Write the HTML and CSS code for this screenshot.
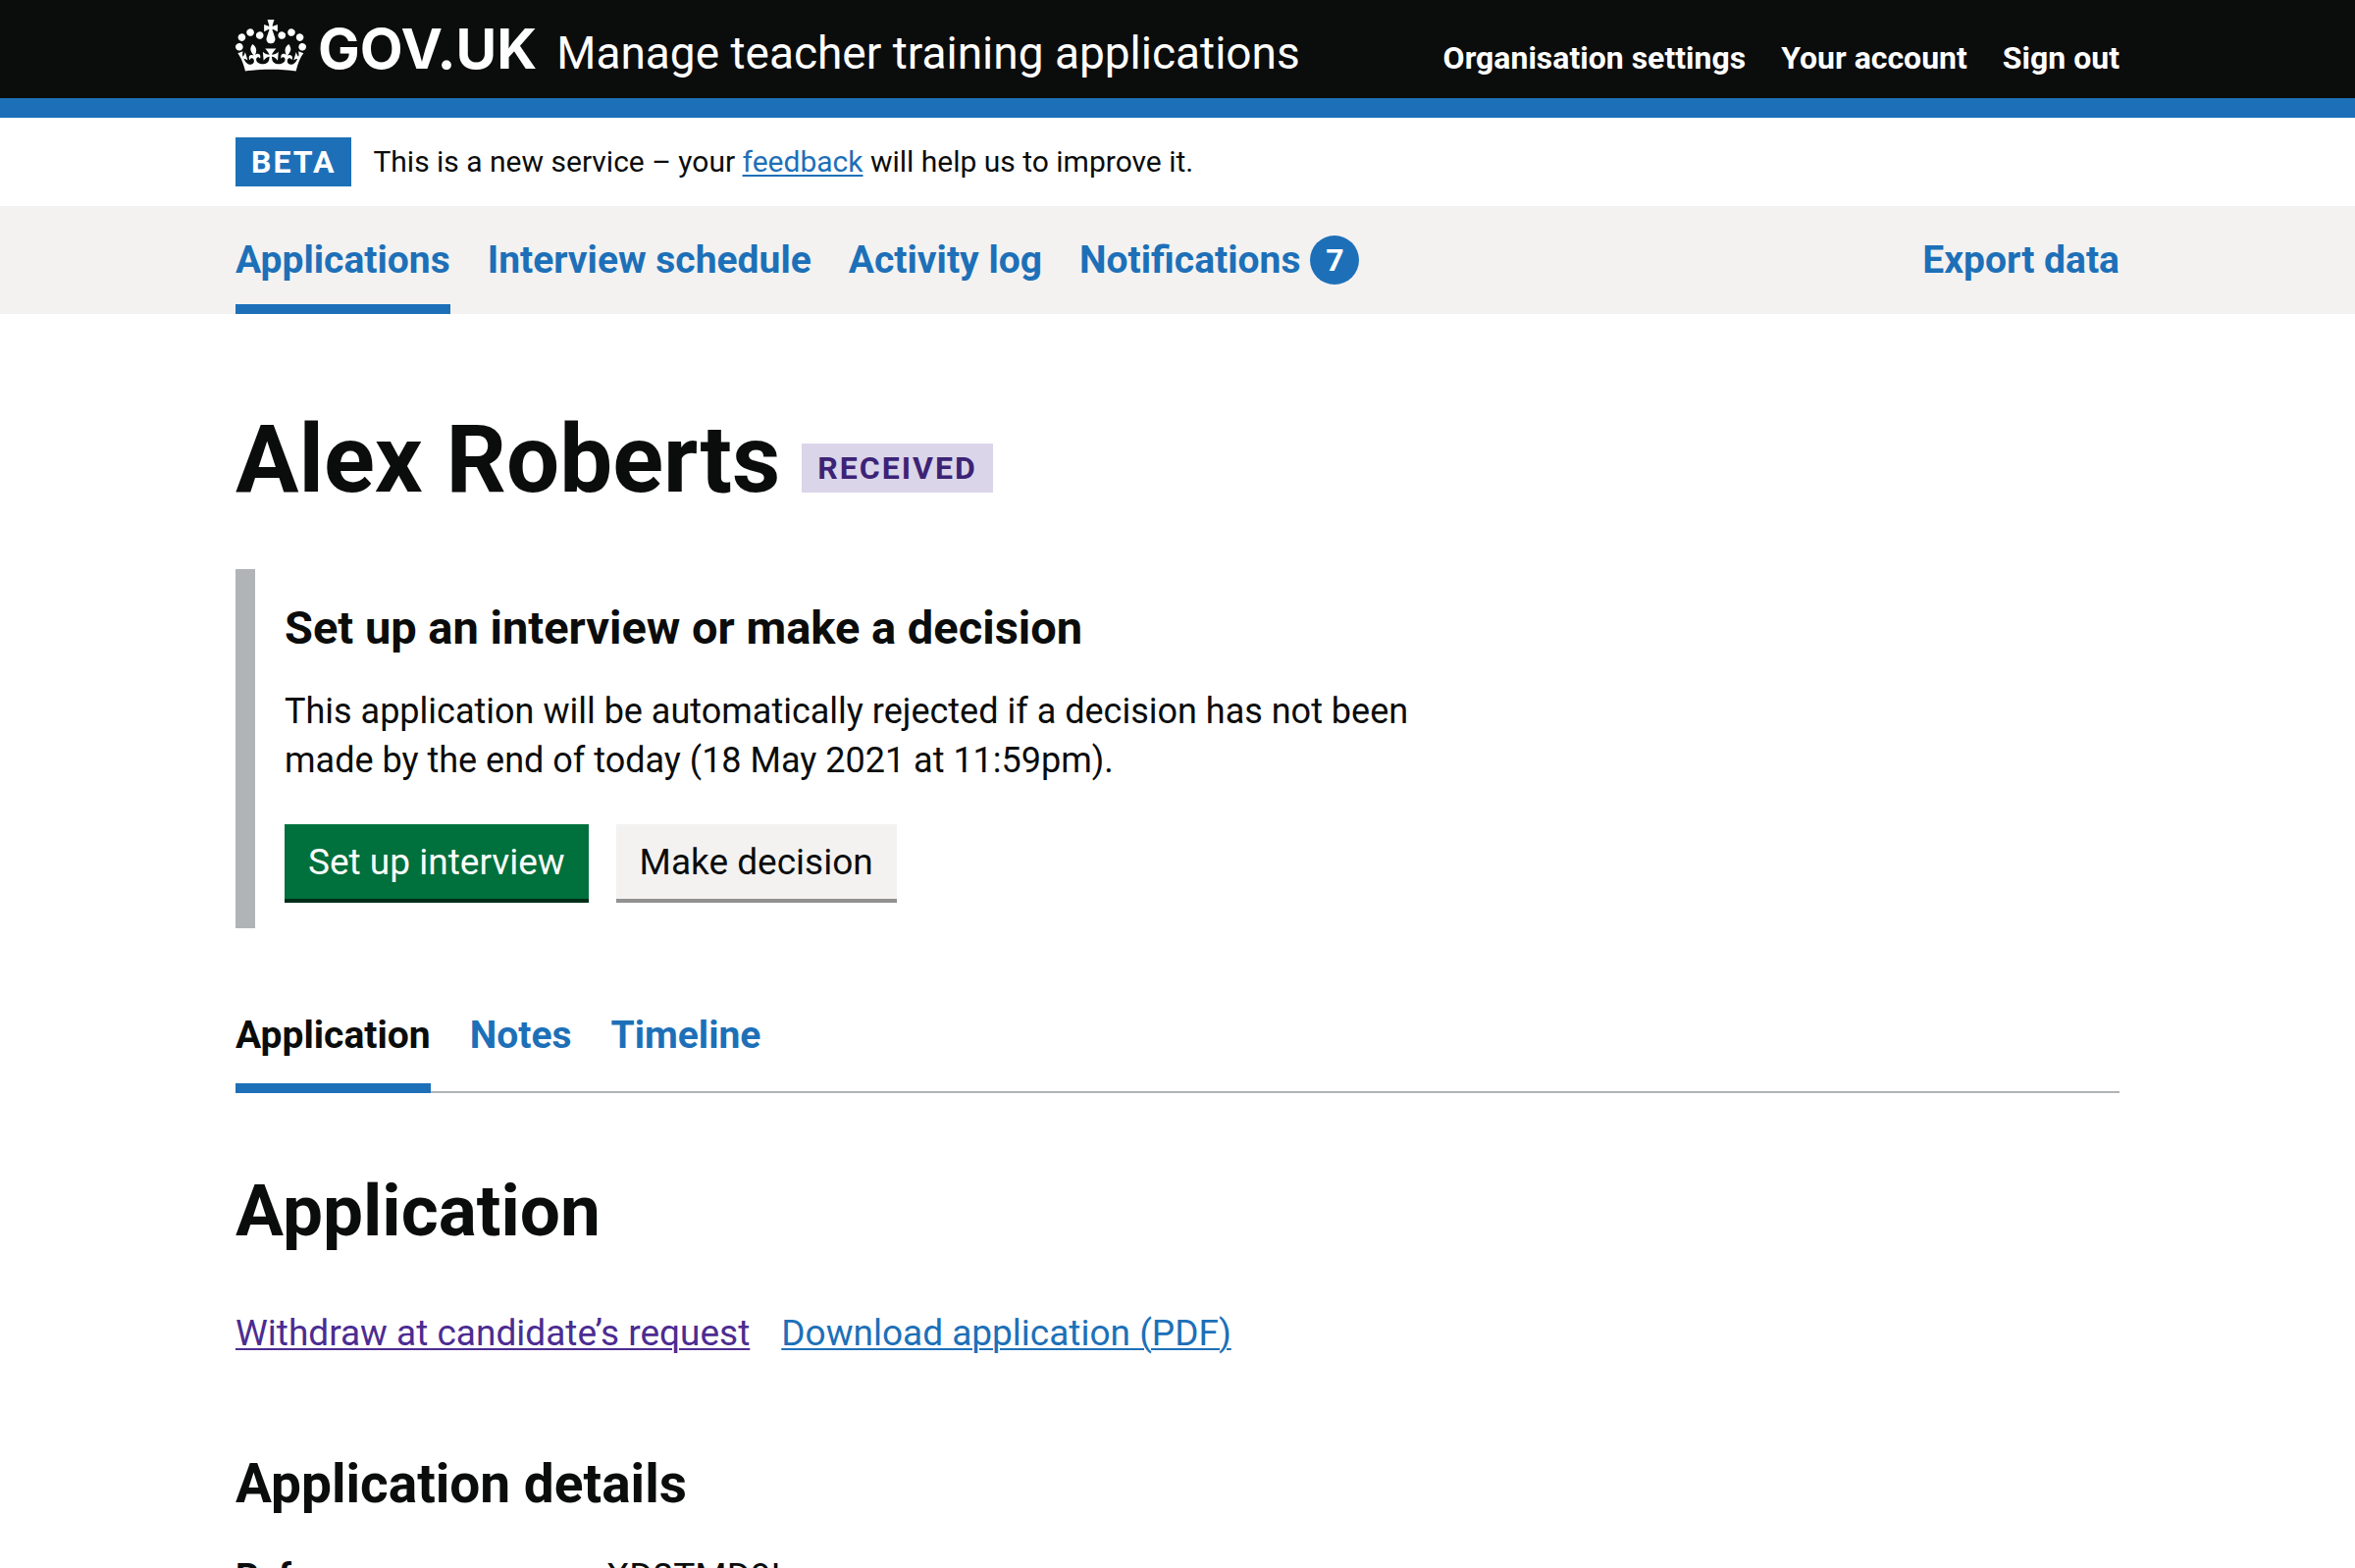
FILE: index.html
```html
<!DOCTYPE html>
<html lang="en">
<head>
  <meta charset="utf-8">
  <meta name="viewport" content="width=device-width, initial-scale=1">
  <title>Alex Roberts - Manage teacher training applications - GOV.UK</title>
  <link rel="stylesheet" href="styles.css">
</head>
<body>
  <header class="header">
    <div class="container header-inner">
      <a class="header-logo" href="#">
        <svg class="header-crown" viewBox="0 0 132 97" width="72" height="53" aria-hidden="true" focusable="false">
          <path fill="currentColor" fill-rule="evenodd" d="M25 30.2c3.5 1.5 7.7-.2 9.1-3.7 1.5-3.6-.2-7.8-3.9-9.2-3.6-1.4-7.6.3-9.1 3.9-1.4 3.5.3 7.5 3.9 9zM9 39.5c3.6 1.5 7.8-.2 9.2-3.7 1.5-3.6-.2-7.8-3.9-9.1-3.6-1.5-7.6.2-9.1 3.8-1.4 3.5.3 7.5 3.8 9zM4.4 57.2c3.5 1.5 7.7-.2 9.1-3.8 1.5-3.6-.2-7.7-3.9-9.1-3.5-1.5-7.6.3-9.1 3.8-1.4 3.5.3 7.6 3.9 9.1zm38.3-21.4c3.5 1.5 7.7-.2 9.1-3.8 1.5-3.6-.2-7.7-3.9-9.1-3.6-1.5-7.6.3-9.1 3.8-1.3 3.6.4 7.7 3.9 9.1zm64.4-5.6c-3.6 1.5-7.8-.2-9.1-3.7-1.5-3.6.2-7.8 3.8-9.2 3.6-1.4 7.7.3 9.2 3.9 1.3 3.5-.4 7.5-3.9 9zm15.9 9.3c-3.6 1.5-7.7-.2-9.1-3.7-1.5-3.6.2-7.8 3.7-9.1 3.6-1.5 7.7.2 9.2 3.8 1.5 3.5-.3 7.5-3.8 9zm4.7 17.7c-3.6 1.5-7.8-.2-9.2-3.8-1.5-3.6.2-7.7 3.9-9.1 3.6-1.5 7.7.3 9.2 3.8 1.3 3.5-.4 7.6-3.9 9.1zM89.3 35.8c-3.6 1.5-7.8-.2-9.2-3.8-1.4-3.6.2-7.7 3.9-9.1 3.6-1.5 7.7.3 9.2 3.8 1.4 3.6-.3 7.7-3.9 9.1zM69.7 17.7l8.9 4.7V9.3l-8.9 2.8c-.2-.3-.5-.6-.9-.9L72.4 0H59.6l3.5 11.2c-.3.3-.6.5-.9.9l-8.8-2.8v13.1l8.8-4.7c.3.3.6.7.9.9l-5 15.4v.1c-.2.8-.4 1.6-.4 2.4 0 4.1 3.1 7.5 7 8.1h.2c.3 0 .7.1 1 .1.4 0 .7 0 1-.1h.2c4-.6 7.1-4.1 7.1-8.1 0-.8-.1-1.7-.4-2.4V34l-5.1-15.4c.4-.2.7-.6 1-.9zM66 92.8c16.9 0 32.8 1.1 47.1 3.2 4-16.9 8.9-26.7 14-33.5l-9.6-3.4c1 4.9 1.1 7.2 0 10.2-1.5-1.4-3-4.3-4.2-8.7L108.6 76c2.8-2 5-3.2 7.5-3.3-4.4 9.4-10 11.9-13.6 11.2-4.3-.8-6.3-4.6-5.6-7.9 1-4.7 5.7-5.9 8-.5 4.3-8.7-3-11.4-7.6-8.8 7.1-7.2 7.9-13.5 2.1-21.1-8 6.1-8.1 12.3-4.5 20.8-4.7-5.4-12.1-2.5-9.5 6.2 3.4-5.2 7.9-2 7.2 3.1-.6 4.3-6.4 7.8-13.5 7.2-10.3-.9-10.9-8-11.2-13.8 2.5-.5 7.1 1.8 11 7.3L80.2 60c-4.1 4.4-8 5.3-12.3 5.4 1.4-4.4 8-11.6 8-11.6H55.5s6.4 7.2 7.9 11.6c-4.2-.1-8-1-12.3-5.4l1.4 16.4c3.9-5.5 8.5-7.7 10.9-7.3-.3 5.8-.9 12.8-11.1 13.8-7.2.6-12.9-2.9-13.5-7.2-.7-5 3.8-8.3 7.1-3.1 2.7-8.7-4.6-11.6-9.4-6.2 3.7-8.5 3.6-14.7-4.6-20.8-5.8 7.6-5 13.9 2.2 21.1-4.7-2.6-11.9.1-7.7 8.8 2.3-5.5 7.1-4.2 8.1.5.7 3.3-1.3 7.1-5.7 7.9-3.5.7-9-1.8-13.5-11.2 2.5.1 4.7 1.3 7.5 3.3l-4.7-15.4c-1.2 4.4-2.7 7.2-4.3 8.7-1.1-3-.9-5.3 0-10.2l-9.5 3.4c5 6.9 9.9 16.7 14 33.5 14.8-2.1 30.8-3.2 47.7-3.2z"/>
        </svg>
        <span class="header-logotype">GOV.UK</span>
      </a>
      <a class="header-service" href="#">Manage teacher training applications</a>
      <nav class="header-nav" aria-label="Account">
        <a href="#">Organisation settings</a>
        <a href="#">Your account</a>
        <a href="#">Sign out</a>
      </nav>
    </div>
  </header>

  <div class="container phase-banner">
    <strong class="tag tag-beta">Beta</strong>
    <span>This is a new service – your <a class="link" href="#">feedback</a> will help us to improve it.</span>
  </div>

  <nav class="primary-nav" aria-label="Primary">
    <div class="container primary-nav-inner">
      <a class="primary-nav-link is-current" href="#" aria-current="page">Applications</a>
      <a class="primary-nav-link" href="#">Interview schedule</a>
      <a class="primary-nav-link" href="#">Activity log</a>
      <a class="primary-nav-link" href="#">Notifications <span class="badge">7</span></a>
      <a class="primary-nav-link is-end" href="#">Export data</a>
    </div>
  </nav>

  <main class="container main">
    <div class="title">
      <h1 class="heading-xl">Alex Roberts</h1>
      <strong class="tag tag-purple">Received</strong>
    </div>

    <section class="inset">
      <h2 class="heading-inset">Set up an interview or make a decision</h2>
      <p class="inset-text">This application will be automatically rejected if a decision has not been made by the end of today (18 May 2021 at 11:59pm).</p>
      <div class="button-group">
        <button class="button" type="button">Set up interview</button>
        <button class="button button-secondary" type="button">Make decision</button>
      </div>
    </section>

    <nav class="tabs" aria-label="Application sections">
      <a class="tab is-current" href="#" aria-current="page">Application</a>
      <a class="tab" href="#">Notes</a>
      <a class="tab" href="#">Timeline</a>
    </nav>

    <h2 class="heading-l">Application</h2>
    <div class="actions">
      <a class="link is-visited" href="#">Withdraw at candidate’s request</a>
      <a class="link" href="#">Download application (PDF)</a>
    </div>

    <h3 class="heading-m">Application details</h3>
    <dl class="summary">
      <div class="summary-row">
        <dt>Reference</dt>
        <dd>XD2TMD9L</dd>
      </div>
    </dl>
  </main>
</body>
</html>
```
FILE: styles.css
```css
:root {
  --black: #0b0c0c;
  --blue: #1d70b8;
  --grey-light: #f3f2f1;
  --grey-mid: #b1b4b6;
  --purple: #4c2c92;
}

* {
  box-sizing: border-box;
}

html {
  scrollbar-width: none;
}

body {
  margin: 0;
  background: #fff;
  color: var(--black);
  font-family: Roboto, "Liberation Sans", sans-serif;
  font-size: 37px;
  line-height: 50px;
}

h1,
h2,
h3,
p,
dl,
dd {
  margin: 0;
}

.container {
  width: 80%;
  max-width: 1920px;
  margin: 0 auto;
}

.link {
  color: var(--blue);
  text-decoration: underline;
  text-decoration-thickness: 2px;
  text-underline-offset: 3px;
}

.link.is-visited {
  color: var(--purple);
}

/* Header */

.header {
  background: var(--black);
  color: #fff;
  border-bottom: 20px solid var(--blue);
}

.header a {
  color: inherit;
  text-decoration: none;
}

.header-inner {
  display: flex;
  align-items: baseline;
  padding: 20px 0 16px;
}

.header-logo {
  display: flex;
  align-items: baseline;
  gap: 12px;
}

.header-crown {
  align-self: flex-start;
}

.header-logotype {
  font-family: Inter, sans-serif;
  font-size: 57px;
  font-weight: 700;
  line-height: 60px;
}

.header-service {
  margin-left: 20px;
  font-size: 46px;
}

.header-nav {
  display: flex;
  gap: 36px;
  margin-left: auto;
  font-size: 32px;
  font-weight: 700;
}

/* Phase banner */

.phase-banner {
  display: flex;
  gap: 22px;
  padding: 20px 0;
  font-size: 30px;
}

.tag {
  padding: 0 16px;
  font-size: 32px;
  font-weight: 700;
  letter-spacing: 2px;
  text-transform: uppercase;
}

.tag-beta {
  background: var(--blue);
  color: #fff;
}

.tag-purple {
  background: #dbd5e9;
  color: #3d2375;
}

/* Primary navigation */

.primary-nav {
  background: var(--grey-light);
}

.primary-nav-inner {
  display: flex;
  gap: 38px;
}

.primary-nav-link {
  display: flex;
  gap: 10px;
  padding: 30px 0 20px;
  border-bottom: 10px solid transparent;
  color: var(--blue);
  font-size: 39px;
  font-weight: 700;
  line-height: 50px;
  text-decoration: none;
}

.primary-nav-link.is-current {
  border-color: var(--blue);
}

.primary-nav-link.is-end {
  margin-left: auto;
}

.badge {
  width: 50px;
  height: 50px;
  border-radius: 50%;
  background: var(--blue);
  color: #fff;
  font-size: 32px;
  text-align: center;
}

/* Main content */

.main {
  padding: 98px 0 60px;
}

.title {
  display: flex;
  align-items: flex-end;
  gap: 22px;
}

.title .tag {
  margin-bottom: 16px;
}

.heading-xl {
  font-size: 96px;
  line-height: 100px;
}

.heading-inset {
  font-size: 47px;
  line-height: 60px;
}

.heading-l {
  margin-top: 80px;
  font-size: 73px;
  line-height: 80px;
}

.heading-m {
  margin-top: 98px;
  font-size: 55px;
  line-height: 60px;
}

.inset {
  max-width: 1280px;
  margin-top: 62px;
  padding: 30px 30px 26px;
  border-left: 20px solid var(--grey-mid);
}

.inset-text {
  margin-top: 30px;
  font-size: 36px;
}

.button-group {
  display: flex;
  gap: 28px;
  margin-top: 40px;
}

.button {
  height: 80px;
  padding: 2px 24px 0;
  border: 0;
  border-bottom: 4px solid #002d18;
  border-radius: 0;
  background: #00703c;
  color: #fff;
  font: inherit;
}

.button-secondary {
  border-color: #929191;
  background: var(--grey-light);
  color: var(--black);
}

/* Tabs */

.tabs {
  display: flex;
  gap: 40px;
  margin-top: 84px;
  box-shadow: inset 0 -2px var(--grey-mid);
}

.tab {
  padding-bottom: 24px;
  border-bottom: 10px solid transparent;
  color: var(--blue);
  font-size: 39px;
  font-weight: 700;
  text-decoration: none;
}

.tab.is-current {
  border-color: var(--blue);
  color: var(--black);
}

.actions {
  display: flex;
  gap: 32px;
  margin-top: 60px;
}

/* Summary list */

.summary {
  margin-top: 40px;
}

.summary-row {
  display: grid;
  grid-template-columns: 378px 1fr;
}

.summary-row dt {
  font-weight: 700;
}
```
